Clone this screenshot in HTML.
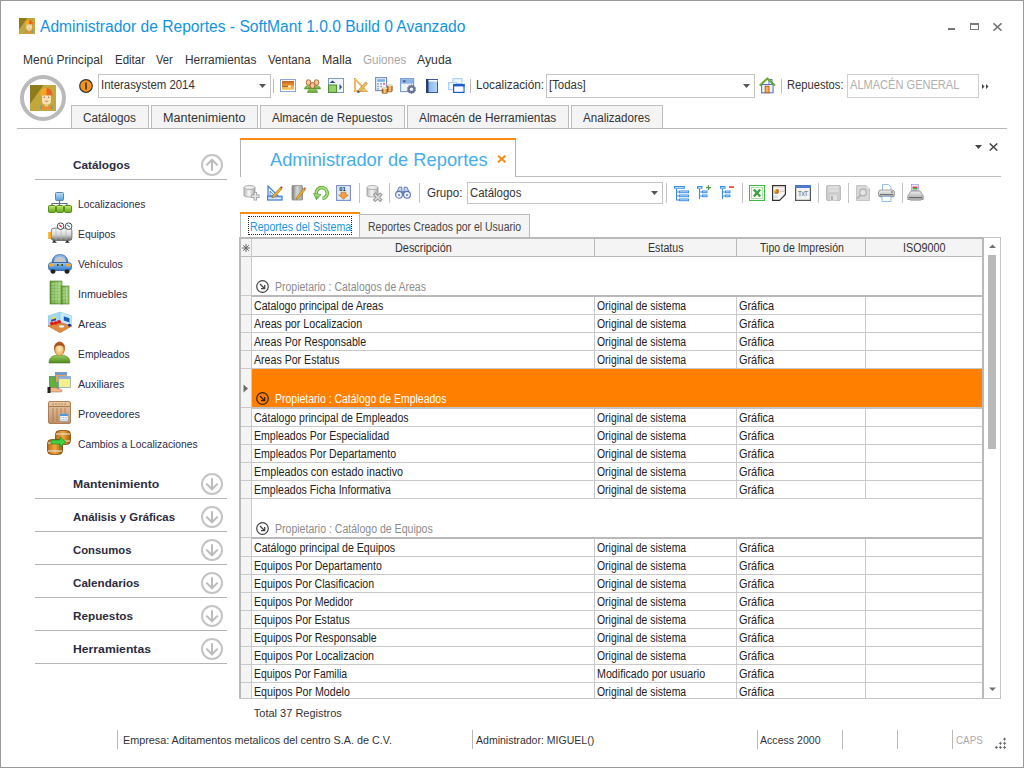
<!DOCTYPE html>
<html><head><meta charset="utf-8"><title>SoftMant</title>
<style>
html,body{margin:0;padding:0;width:1024px;height:768px;overflow:hidden;background:#fff;}
body{position:relative;font-family:"Liberation Sans",sans-serif;}
.a{position:absolute;box-sizing:border-box;}
.t{white-space:nowrap;transform-origin:0 0;}
</style></head><body>
<div class="a" style="left:0px;top:0px;width:1024px;height:1px;background:#999;"></div>
<div class="a" style="left:0px;top:0px;width:1px;height:768px;background:#999;"></div>
<div class="a" style="left:1023px;top:0px;width:1px;height:768px;background:#999;"></div>
<div class="a" style="left:0px;top:767px;width:1024px;height:1px;background:#999;"></div>
<svg class="a" style="left:19px;top:18px;" width="16" height="16" viewBox="0 0 26 26"><rect width="26" height="26" fill="#c2a83c"/><path d="M0 0H13.5L0 19Z" fill="#8f7b1c"/><path d="M10 10.5C10 5 12.5 3 16.2 3S22.5 5 22.5 10.5Z" fill="#f5a623"/><path d="M16.5 3C20 3.2 22.5 5.5 22.5 10.5H16.5Z" fill="#e8622a"/><path d="M12 10.5H21V16C21 18.5 19 20 16.5 20S12 18.5 12 16Z" fill="#f6e0b4"/><circle cx="14.3" cy="12.3" r="0.7" fill="#a07060"/><circle cx="18.6" cy="12.3" r="0.7" fill="#a07060"/><ellipse cx="16.5" cy="16.3" rx="2" ry="0.9" fill="#d8a080"/><rect x="15" y="19" width="3" height="3" fill="#eccb98"/><path d="M11 21.5H22V24H11Z" fill="#f08a30"/><rect x="10.5" y="20.5" width="1.5" height="3.5" fill="#5a9ad0"/><rect x="21" y="20.5" width="1.5" height="3.5" fill="#5a9ad0"/></svg>
<div class="a t" style="left:39.88px;top:19px;font-size:16px;line-height:16px;color:#0f94e4;font-weight:normal;font-family:'Liberation Sans',sans-serif;transform:scaleX(0.9748);">Administrador de Reportes - SoftMant 1.0.0 Build 0 Avanzado</div>
<div class="a" style="left:948px;top:28px;width:7px;height:2px;background:#777;"></div>
<svg class="a" style="left:970px;top:23px;" width="9" height="7" viewBox="0 0 9 7"><rect x="0.5" y="0.5" width="8" height="6" fill="none" stroke="#7a7a7a"/><rect x="0" y="0" width="9" height="2" fill="#7a7a7a"/></svg>
<svg class="a" style="left:993px;top:23px;" width="9" height="8" viewBox="0 0 9 8"><path d="M0.5 0.3L8.5 7.7M8.5 0.3L0.5 7.7" stroke="#7a7a7a" stroke-width="1.6"/></svg>
<div class="a t" style="left:23.34px;top:54px;font-size:12.5px;line-height:12.5px;color:#333;font-weight:normal;font-family:'Liberation Sans',sans-serif;transform:scaleX(0.9631);">Menú Principal</div>
<div class="a t" style="left:115.14px;top:54px;font-size:12.5px;line-height:12.5px;color:#333;font-weight:normal;font-family:'Liberation Sans',sans-serif;transform:scaleX(0.9195);">Editar</div>
<div class="a t" style="left:156.44px;top:54px;font-size:12.5px;line-height:12.5px;color:#333;font-weight:normal;font-family:'Liberation Sans',sans-serif;transform:scaleX(0.8967);">Ver</div>
<div class="a t" style="left:185.14px;top:54px;font-size:12.5px;line-height:12.5px;color:#333;font-weight:normal;font-family:'Liberation Sans',sans-serif;transform:scaleX(0.9507);">Herramientas</div>
<div class="a t" style="left:267.64px;top:54px;font-size:12.5px;line-height:12.5px;color:#333;font-weight:normal;font-family:'Liberation Sans',sans-serif;transform:scaleX(0.9312);">Ventana</div>
<div class="a t" style="left:321.84px;top:54px;font-size:12.5px;line-height:12.5px;color:#333;font-weight:normal;font-family:'Liberation Sans',sans-serif;transform:scaleX(0.9884);">Malla</div>
<div class="a t" style="left:362.84px;top:54px;font-size:12.5px;line-height:12.5px;color:#a8a8a8;font-weight:normal;font-family:'Liberation Sans',sans-serif;transform:scaleX(0.9284);">Guiones</div>
<div class="a t" style="left:417.44px;top:54px;font-size:12.5px;line-height:12.5px;color:#333;font-weight:normal;font-family:'Liberation Sans',sans-serif;transform:scaleX(0.9803);">Ayuda</div>
<svg class="a" style="left:20px;top:75px;" width="46" height="46" viewBox="0 0 46 46"><circle cx="23" cy="23" r="21" fill="none" stroke="#bababa" stroke-width="4"/></svg>
<svg class="a" style="left:30px;top:85px;" width="26" height="26" viewBox="0 0 26 26"><rect width="26" height="26" fill="#c2a83c"/><path d="M0 0H13.5L0 19Z" fill="#8f7b1c"/><path d="M10 10.5C10 5 12.5 3 16.2 3S22.5 5 22.5 10.5Z" fill="#f5a623"/><path d="M16.5 3C20 3.2 22.5 5.5 22.5 10.5H16.5Z" fill="#e8622a"/><path d="M12 10.5H21V16C21 18.5 19 20 16.5 20S12 18.5 12 16Z" fill="#f6e0b4"/><circle cx="14.3" cy="12.3" r="0.7" fill="#a07060"/><circle cx="18.6" cy="12.3" r="0.7" fill="#a07060"/><ellipse cx="16.5" cy="16.3" rx="2" ry="0.9" fill="#d8a080"/><rect x="15" y="19" width="3" height="3" fill="#eccb98"/><path d="M11 21.5H22V24H11Z" fill="#f08a30"/><rect x="10.5" y="20.5" width="1.5" height="3.5" fill="#5a9ad0"/><rect x="21" y="20.5" width="1.5" height="3.5" fill="#5a9ad0"/></svg>
<svg class="a" style="left:79px;top:79px;" width="14" height="14" viewBox="0 0 14 14"><circle cx="7" cy="7" r="6.3" fill="#f7931e" stroke="#333" stroke-width="1.2"/><rect x="6.2" y="3.5" width="1.6" height="7" fill="#333"/></svg>
<div class="a" style="left:98px;top:74px;width:173px;height:24px;background:#fff;border:1px solid #c4c4c4;"></div>
<div class="a t" style="left:101.00px;top:79px;font-size:12px;line-height:12px;color:#333;font-weight:normal;font-family:'Liberation Sans',sans-serif;transform:scaleX(0.9500);">Interasystem 2014</div>
<svg class="a" style="left:259px;top:84px;" width="8" height="5" viewBox="0 0 8 5"><path d="M0 0H7L3.5 4Z" fill="#555"/></svg>
<div class="a" style="left:273px;top:79px;width:1px;height:14px;background:#bbb;"></div>
<svg class="a" style="left:280px;top:79px;" width="16" height="13" viewBox="0 0 16 13"><defs><linearGradient id="gsun" x1="0" y1="0" x2="0" y2="1"><stop offset="0" stop-color="#c0601a"/><stop offset="0.55" stop-color="#f0a040"/><stop offset="1" stop-color="#f8d070"/></linearGradient></defs><rect x="0.5" y="0.5" width="15" height="12" fill="#fff" stroke="#8aa4d8"/><rect x="2" y="2" width="12" height="9" fill="url(#gsun)"/><path d="M2 7.3H8" stroke="#5a3010" stroke-width="0.8" opacity="0.7"/><circle cx="9.5" cy="7.5" r="1.3" fill="#fff8d0"/></svg>
<svg class="a" style="left:304px;top:79px;" width="17" height="14" viewBox="0 0 17 14"><defs><linearGradient id="gppl" x1="0" y1="0" x2="0" y2="1"><stop offset="0" stop-color="#a8d870"/><stop offset="1" stop-color="#5a9a30"/></linearGradient></defs><path d="M0.5 10C0.5 7.5 2.5 6.5 4.5 6.5S8.5 7.5 8.5 10Z" fill="url(#gppl)" stroke="#4a8a20" stroke-width="0.5"/><path d="M8.5 10C8.5 7.5 10.5 6.5 12.5 6.5S16.5 7.5 16.5 10Z" fill="url(#gppl)" stroke="#4a8a20" stroke-width="0.5"/><ellipse cx="4.5" cy="3.5" rx="2.3" ry="2.8" fill="#f4c890" stroke="#a0582a" stroke-width="0.8"/><ellipse cx="12.5" cy="3.5" rx="2.3" ry="2.8" fill="#f4c890" stroke="#a0582a" stroke-width="0.8"/><path d="M3.5 13.8C3.5 10.5 6 9.5 8.5 9.5S13.5 10.5 13.5 13.8Z" fill="url(#gppl)" stroke="#4a8a20" stroke-width="0.5"/><ellipse cx="8.5" cy="6.5" rx="2.5" ry="3" fill="#f4c890" stroke="#a0582a" stroke-width="0.9"/></svg>
<svg class="a" style="left:328px;top:78px;" width="16" height="15" viewBox="0 0 16 15"><rect x="0.5" y="0.5" width="15" height="14" fill="#f0f4fc" stroke="#7a9ad0"/><path d="M4.5 2.5L7.5 5H1.5Z" fill="#3a4a6a"/><path d="M11.5 6L14 9L11.5 12Z" fill="#3a4a6a"/><rect x="0.6" y="7" width="8" height="7.4" fill="#9ad070" stroke="#4a8a2a" stroke-width="1"/></svg>
<svg class="a" style="left:354px;top:78px;" width="14" height="15" viewBox="0 0 14 15"><path d="M1 1V13H12Z" fill="none" stroke="#e0a040" stroke-width="1.8"/><path d="M1 1V13H12Z" fill="none" stroke="#f8e0a8" stroke-width="0.6"/><path d="M4 12.5L11.5 4L13.5 5.5L6 14L3.5 14.8Z" fill="#f0c050" stroke="#a07020" stroke-width="0.5"/><path d="M3.5 14.8L4 12.5L6 14Z" fill="#2a3a6a"/></svg>
<svg class="a" style="left:375px;top:77px;" width="18" height="17" viewBox="0 0 18 17"><defs><linearGradient id="gcoin" x1="0" y1="0" x2="1" y2="0"><stop offset="0" stop-color="#a05a10"/><stop offset="0.5" stop-color="#f8d090"/><stop offset="1" stop-color="#b06818"/></linearGradient></defs><rect x="0.6" y="0.6" width="11" height="13" fill="#eef2fa" stroke="#7a8ac0" stroke-width="1.1"/><rect x="2.2" y="2.2" width="7.8" height="2.6" fill="#7ab0e8"/><g fill="#8a96b8"><rect x="2.2" y="6.2" width="1.6" height="1.4"/><rect x="5.2" y="6.2" width="1.6" height="1.4"/><rect x="2.2" y="8.8" width="1.6" height="1.4"/><rect x="5.2" y="8.8" width="1.6" height="1.4"/><rect x="2.2" y="11.2" width="1.6" height="1.4"/></g><rect x="8.2" y="6.2" width="1.6" height="1.4" fill="#e03030"/><rect x="12.5" y="8" width="4.8" height="7" rx="1.5" fill="url(#gcoin)" stroke="#7a4008" stroke-width="0.5"/><rect x="7" y="11" width="5.5" height="5.6" rx="1.5" fill="url(#gcoin)" stroke="#7a4008" stroke-width="0.5"/><ellipse cx="14.9" cy="8.3" rx="2.3" ry="1" fill="#f8e0b0"/><ellipse cx="9.75" cy="11.3" rx="2.6" ry="1" fill="#f8e0b0"/></svg>
<svg class="a" style="left:400px;top:78px;" width="17" height="16" viewBox="0 0 17 16"><rect x="0.6" y="0.6" width="13" height="13" fill="#eef3fb" stroke="#7a9ad0" stroke-width="1.1"/><rect x="1.2" y="1.2" width="11.8" height="4.5" fill="#8ab4e4"/><path d="M2.5 2.5H6L4.25 4.8Z" fill="#2a4a8a"/><path d="M11.5 7.5L12.6 8.8L14.3 8.5L14.6 10.2L16.1 11L15.3 12.5L16.1 14L14.6 14.8L14.3 16.5L12.6 16.2L11.5 17.5L10.4 16.2L8.7 16.5L8.4 14.8L6.9 14L7.7 12.5L6.9 11L8.4 10.2L8.7 8.5L10.4 8.8Z" fill="#6a7490" transform="translate(0,-1.3) scale(1)"/><circle cx="11.5" cy="11.2" r="1.7" fill="#eef3fb"/></svg>
<svg class="a" style="left:426px;top:79px;" width="12" height="14" viewBox="0 0 12 14"><defs><linearGradient id="gbook" x1="0" y1="0" x2="1" y2="0"><stop offset="0" stop-color="#7ab0e8"/><stop offset="1" stop-color="#b8d8f8"/></linearGradient></defs><rect x="0.5" y="0.5" width="11" height="13" fill="url(#gbook)" stroke="#3a5a9a"/><rect x="0" y="0" width="2.5" height="14" fill="#2a3a6a"/><rect x="2.5" y="1" width="9" height="1.5" fill="#fff"/></svg>
<svg class="a" style="left:448px;top:78px;" width="17" height="15" viewBox="0 0 17 15"><rect x="5" y="0.6" width="9" height="5" fill="#eef6fe" stroke="#a8ccf4" stroke-width="1.1"/><rect x="0.6" y="4.6" width="8" height="7" fill="#f2f8ff" stroke="#a8ccf4" stroke-width="1.1"/><rect x="5.6" y="6.6" width="10.4" height="7.8" fill="#fff" stroke="#1a5ccc" stroke-width="1.2"/><rect x="5" y="6" width="11.6" height="2.4" fill="#1a5ccc"/><path d="M13 13L15.5 10.5V13Z" fill="#c8dcf8"/></svg>
<div class="a" style="left:470px;top:79px;width:1px;height:14px;background:#bbb;"></div>
<div class="a t" style="left:476.26px;top:79px;font-size:12px;line-height:12px;color:#333;font-weight:normal;font-family:'Liberation Sans',sans-serif;transform:scaleX(0.9813);">Localización:</div>
<div class="a" style="left:546px;top:74px;width:209px;height:24px;background:#fff;border:1px solid #c4c4c4;"></div>
<div class="a t" style="left:549.00px;top:79px;font-size:12px;line-height:12px;color:#333;font-weight:normal;font-family:'Liberation Sans',sans-serif;transform:scaleX(0.9500);">[Todas]</div>
<svg class="a" style="left:743px;top:84px;" width="8" height="5" viewBox="0 0 8 5"><path d="M0 0H7L3.5 4Z" fill="#555"/></svg>
<svg class="a" style="left:759px;top:77px;" width="17" height="17" viewBox="0 0 17 17"><rect x="2.6" y="7.5" width="11.5" height="8.3" fill="#eaf2fc" stroke="#5a7ac8" stroke-width="1.1"/><rect x="10" y="2.5" width="3" height="5" fill="#eaf2fc" stroke="#5a7ac8" stroke-width="1"/><path d="M0.8 8.5L8.4 1.5L16 8.5" fill="none" stroke="#5a9a20" stroke-width="2"/><path d="M0.8 8.5L8.4 1.5L16 8.5" fill="none" stroke="#b8e070" stroke-width="0.7" stroke-dasharray="1 0.8"/><rect x="6.2" y="9.2" width="3.8" height="6.6" fill="#f4b050" stroke="#c05a10" stroke-width="0.9"/></svg>
<div class="a" style="left:781px;top:79px;width:1px;height:14px;background:#bbb;"></div>
<div class="a t" style="left:787.06px;top:79px;font-size:12px;line-height:12px;color:#333;font-weight:normal;font-family:'Liberation Sans',sans-serif;transform:scaleX(0.9304);">Repuestos:</div>
<div class="a" style="left:847px;top:74px;width:132px;height:24px;background:#fff;border:1px solid #cfcfcf;"></div>
<div class="a t" style="left:849.86px;top:79px;font-size:12px;line-height:12px;color:#b0b0b0;font-weight:normal;font-family:'Liberation Sans',sans-serif;transform:scaleX(0.9215);">ALMACÉN GENERAL</div>
<svg class="a" style="left:982px;top:84px;" width="7" height="5" viewBox="0 0 7 5"><path d="M0 0L2.5 2.5L0 5Z M4 0L6.5 2.5L4 5Z" fill="#444"/></svg>
<div class="a" style="left:17px;top:128px;width:990px;height:1px;background:#b9b9b9;"></div>
<div class="a" style="left:71px;top:105px;width:78px;height:23px;background:#f4f4f4;border:1px solid #bdbdbd;border-bottom:none;"></div>
<div class="a t" style="left:83.36px;top:112px;font-size:12px;line-height:12px;color:#333;font-weight:normal;font-family:'Liberation Sans',sans-serif;transform:scaleX(0.9786);">Catálogos</div>
<div class="a" style="left:151px;top:105px;width:107px;height:23px;background:#f4f4f4;border:1px solid #bdbdbd;border-bottom:none;"></div>
<div class="a t" style="left:163.06px;top:112px;font-size:12px;line-height:12px;color:#333;font-weight:normal;font-family:'Liberation Sans',sans-serif;transform:scaleX(1.0479);">Mantenimiento</div>
<div class="a" style="left:260px;top:105px;width:145px;height:23px;background:#f4f4f4;border:1px solid #bdbdbd;border-bottom:none;"></div>
<div class="a t" style="left:271.96px;top:112px;font-size:12px;line-height:12px;color:#333;font-weight:normal;font-family:'Liberation Sans',sans-serif;transform:scaleX(0.9719);">Almacén de Repuestos</div>
<div class="a" style="left:407px;top:105px;width:162px;height:23px;background:#f4f4f4;border:1px solid #bdbdbd;border-bottom:none;"></div>
<div class="a t" style="left:419.06px;top:112px;font-size:12px;line-height:12px;color:#333;font-weight:normal;font-family:'Liberation Sans',sans-serif;transform:scaleX(0.9896);">Almacén de Herramientas</div>
<div class="a" style="left:571px;top:105px;width:92px;height:23px;background:#f4f4f4;border:1px solid #bdbdbd;border-bottom:none;"></div>
<div class="a t" style="left:583.06px;top:112px;font-size:12px;line-height:12px;color:#333;font-weight:normal;font-family:'Liberation Sans',sans-serif;transform:scaleX(0.9669);">Analizadores</div>
<div class="a t" style="left:72.80px;top:160px;font-size:11px;line-height:11px;color:#2c2c40;font-weight:bold;font-family:'Liberation Sans',sans-serif;transform:scaleX(1.0718);">Catálogos</div>
<svg class="a" style="left:201px;top:154px;" width="22" height="22" viewBox="0 0 22 22"><circle cx="11" cy="11" r="10" fill="none" stroke="#c4c4c4" stroke-width="2"/><path d="M11 16.7V5.5M5.3 11.4L11 5.7L16.7 11.4" fill="none" stroke="#bcbcbc" stroke-width="2"/></svg>
<div class="a" style="left:35px;top:179px;width:192px;height:1px;background:#b4b4b4;"></div>
<div class="a t" style="left:78.30px;top:199px;font-size:11px;line-height:11px;color:#2c2c48;font-weight:normal;font-family:'Liberation Sans',sans-serif;transform:scaleX(0.9326);">Localizaciones</div>
<div class="a t" style="left:78.30px;top:229px;font-size:11px;line-height:11px;color:#2c2c48;font-weight:normal;font-family:'Liberation Sans',sans-serif;transform:scaleX(0.9431);">Equipos</div>
<div class="a t" style="left:78.30px;top:259px;font-size:11px;line-height:11px;color:#2c2c48;font-weight:normal;font-family:'Liberation Sans',sans-serif;transform:scaleX(0.9369);">Vehículos</div>
<div class="a t" style="left:78.30px;top:289px;font-size:11px;line-height:11px;color:#2c2c48;font-weight:normal;font-family:'Liberation Sans',sans-serif;transform:scaleX(0.9732);">Inmuebles</div>
<div class="a t" style="left:78.30px;top:319px;font-size:11px;line-height:11px;color:#2c2c48;font-weight:normal;font-family:'Liberation Sans',sans-serif;transform:scaleX(0.9915);">Areas</div>
<div class="a t" style="left:78.30px;top:349px;font-size:11px;line-height:11px;color:#2c2c48;font-weight:normal;font-family:'Liberation Sans',sans-serif;transform:scaleX(0.9375);">Empleados</div>
<div class="a t" style="left:78.30px;top:379px;font-size:11px;line-height:11px;color:#2c2c48;font-weight:normal;font-family:'Liberation Sans',sans-serif;transform:scaleX(0.9708);">Auxiliares</div>
<div class="a t" style="left:78.30px;top:409px;font-size:11px;line-height:11px;color:#2c2c48;font-weight:normal;font-family:'Liberation Sans',sans-serif;transform:scaleX(0.9939);">Proveedores</div>
<div class="a t" style="left:78.30px;top:439px;font-size:11px;line-height:11px;color:#2c2c48;font-weight:normal;font-family:'Liberation Sans',sans-serif;transform:scaleX(0.9366);">Cambios a Localizaciones</div>
<div class="a t" style="left:73.00px;top:479px;font-size:11px;line-height:11px;color:#2c2c40;font-weight:bold;font-family:'Liberation Sans',sans-serif;transform:scaleX(1.1118);">Mantenimiento</div>
<svg class="a" style="left:201px;top:473px;" width="22" height="22" viewBox="0 0 22 22"><circle cx="11" cy="11" r="10" fill="none" stroke="#c4c4c4" stroke-width="2"/><path d="M11 5.3V16.5M5.3 10.6L11 16.3L16.7 10.6" fill="none" stroke="#bcbcbc" stroke-width="2"/></svg>
<div class="a" style="left:35px;top:498px;width:192px;height:1px;background:#b4b4b4;"></div>
<div class="a t" style="left:73.00px;top:512px;font-size:11px;line-height:11px;color:#2c2c40;font-weight:bold;font-family:'Liberation Sans',sans-serif;transform:scaleX(1.0360);">Análisis y Gráficas</div>
<svg class="a" style="left:201px;top:506px;" width="22" height="22" viewBox="0 0 22 22"><circle cx="11" cy="11" r="10" fill="none" stroke="#c4c4c4" stroke-width="2"/><path d="M11 5.3V16.5M5.3 10.6L11 16.3L16.7 10.6" fill="none" stroke="#bcbcbc" stroke-width="2"/></svg>
<div class="a" style="left:35px;top:531px;width:192px;height:1px;background:#b4b4b4;"></div>
<div class="a t" style="left:73.00px;top:545px;font-size:11px;line-height:11px;color:#2c2c40;font-weight:bold;font-family:'Liberation Sans',sans-serif;transform:scaleX(1.0291);">Consumos</div>
<svg class="a" style="left:201px;top:539px;" width="22" height="22" viewBox="0 0 22 22"><circle cx="11" cy="11" r="10" fill="none" stroke="#c4c4c4" stroke-width="2"/><path d="M11 5.3V16.5M5.3 10.6L11 16.3L16.7 10.6" fill="none" stroke="#bcbcbc" stroke-width="2"/></svg>
<div class="a" style="left:35px;top:564px;width:192px;height:1px;background:#b4b4b4;"></div>
<div class="a t" style="left:73.00px;top:578px;font-size:11px;line-height:11px;color:#2c2c40;font-weight:bold;font-family:'Liberation Sans',sans-serif;transform:scaleX(1.0576);">Calendarios</div>
<svg class="a" style="left:201px;top:572px;" width="22" height="22" viewBox="0 0 22 22"><circle cx="11" cy="11" r="10" fill="none" stroke="#c4c4c4" stroke-width="2"/><path d="M11 5.3V16.5M5.3 10.6L11 16.3L16.7 10.6" fill="none" stroke="#bcbcbc" stroke-width="2"/></svg>
<div class="a" style="left:35px;top:597px;width:192px;height:1px;background:#b4b4b4;"></div>
<div class="a t" style="left:73.00px;top:611px;font-size:11px;line-height:11px;color:#2c2c40;font-weight:bold;font-family:'Liberation Sans',sans-serif;transform:scaleX(1.0668);">Repuestos</div>
<svg class="a" style="left:201px;top:605px;" width="22" height="22" viewBox="0 0 22 22"><circle cx="11" cy="11" r="10" fill="none" stroke="#c4c4c4" stroke-width="2"/><path d="M11 5.3V16.5M5.3 10.6L11 16.3L16.7 10.6" fill="none" stroke="#bcbcbc" stroke-width="2"/></svg>
<div class="a" style="left:35px;top:630px;width:192px;height:1px;background:#b4b4b4;"></div>
<div class="a t" style="left:73.00px;top:644px;font-size:11px;line-height:11px;color:#2c2c40;font-weight:bold;font-family:'Liberation Sans',sans-serif;transform:scaleX(1.1092);">Herramientas</div>
<svg class="a" style="left:201px;top:638px;" width="22" height="22" viewBox="0 0 22 22"><circle cx="11" cy="11" r="10" fill="none" stroke="#c4c4c4" stroke-width="2"/><path d="M11 5.3V16.5M5.3 10.6L11 16.3L16.7 10.6" fill="none" stroke="#bcbcbc" stroke-width="2"/></svg>
<div class="a" style="left:35px;top:663px;width:192px;height:1px;background:#b4b4b4;"></div>
<svg class="a" style="left:48px;top:191px;" width="24" height="23" viewBox="0 0 24 23"><defs><linearGradient id="gb" x1="0" y1="0" x2="0" y2="1"><stop offset="0" stop-color="#bfe0fa"/><stop offset="1" stop-color="#5a9fdc"/></linearGradient><linearGradient id="gg" x1="0" y1="0" x2="0" y2="1"><stop offset="0" stop-color="#c6ec6a"/><stop offset="1" stop-color="#5fa51c"/></linearGradient></defs><rect x="7.5" y="1.5" width="8" height="8" rx="1" fill="url(#gb)" stroke="#5f86b0"/><path d="M11.5 9.5V12M4 15V12.5H19V15M11.5 12.5V15" fill="none" stroke="#5f7090" stroke-width="1.2"/><rect x="0.5" y="14.5" width="7" height="7" rx="1" fill="url(#gg)" stroke="#5a8a20"/><rect x="8.5" y="14.5" width="7" height="7" rx="1" fill="url(#gg)" stroke="#5a8a20"/><rect x="16.5" y="14.5" width="7" height="7" rx="1" fill="url(#gg)" stroke="#5a8a20"/></svg>
<svg class="a" style="left:47px;top:222px;" width="26" height="22" viewBox="0 0 26 22"><defs><linearGradient id="gt" x1="0" y1="0" x2="0" y2="1"><stop offset="0" stop-color="#ffffff"/><stop offset="0.55" stop-color="#d4d4d4"/><stop offset="1" stop-color="#6a6a6a"/></linearGradient></defs><rect x="4.3" y="6.2" width="20.6" height="12.2" rx="2.5" fill="url(#gt)" stroke="#5a5a5a" stroke-width="0.8"/><path d="M9 7V18M14 7V18M19 7V18" stroke="#b4b4b4" stroke-width="0.7"/><circle cx="13.6" cy="4.2" r="3.3" fill="#fff" stroke="#3a3a3a" stroke-width="0.9"/><path d="M12.3 2.9L14.6 5" stroke="#f01010" stroke-width="1.1"/><circle cx="21.6" cy="4.2" r="3.3" fill="#fff" stroke="#3a3a3a" stroke-width="0.9"/><path d="M20.3 2.9L22.6 5" stroke="#2a80e8" stroke-width="1.1"/><rect x="1.2" y="10" width="3" height="7" fill="#f8b020"/><path d="M7 18.2L5 20.8H10Z M20 18.2L18 20.8H23Z" fill="#2a2a2a"/></svg>
<svg class="a" style="left:48px;top:254px;" width="24" height="20" viewBox="0 0 24 20"><defs><linearGradient id="gc" x1="0" y1="0" x2="0" y2="1"><stop offset="0" stop-color="#9ccaf4"/><stop offset="1" stop-color="#2f78c8"/></linearGradient></defs><path d="M4 9C4.5 3 7 0.7 12 0.7S19.5 3 20 9Z" fill="url(#gc)" stroke="#2a5a9a" stroke-width="0.8"/><path d="M6 8.5C6.5 4.5 8 3 12 3S17.5 4.5 18 8.5Z" fill="#c8c8c8"/><rect x="0.5" y="8.5" width="23" height="8" rx="3" fill="url(#gc)" stroke="#2a5a9a" stroke-width="0.8"/><ellipse cx="3.5" cy="11" rx="2.5" ry="1.6" fill="#f8a820"/><ellipse cx="20.5" cy="11" rx="2.5" ry="1.6" fill="#f8a820"/><rect x="9" y="10" width="6" height="2" fill="#204a80"/><rect x="10.5" y="10.2" width="3" height="1.5" fill="#e8c030"/><ellipse cx="5" cy="17.5" rx="2.5" ry="2.2" fill="#222"/><ellipse cx="19" cy="17.5" rx="2.5" ry="2.2" fill="#222"/></svg>
<svg class="a" style="left:49px;top:280px;" width="21" height="25" viewBox="0 0 21 25"><defs><linearGradient id="gh" x1="0" y1="0" x2="1" y2="0"><stop offset="0" stop-color="#5f9a3a"/><stop offset="1" stop-color="#9fd070"/></linearGradient></defs><rect x="1" y="1" width="12" height="23" fill="url(#gh)" stroke="#4f7a2a" stroke-width="0.6"/><rect x="12" y="6" width="8" height="18" fill="url(#gh)" stroke="#4f7a2a" stroke-width="0.6"/><path d="M2 4H12M2 7H12M2 10H12M2 13H12M2 16H12M2 19H12M13 9H19M13 12H19M13 15H19M13 18H19M4 2V23M7 2V23M10 2V23M15 7V23M17.5 7V23" stroke="#c8eab0" stroke-width="0.7" opacity="0.8"/></svg>
<svg class="a" style="left:48px;top:311px;" width="24" height="23" viewBox="0 0 24 23"><path d="M0 5L12 1V11.5L0 15Z" fill="#a4d8f2" stroke="#7ab8e0" stroke-width="0.5"/><path d="M12 1L24 5V15L12 11.5Z" fill="#c4eafc" stroke="#7ab8e0" stroke-width="0.5"/><path d="M0 15L12 11.5L24 15L12 21.8Z" fill="#e08a3a" stroke="#a85818" stroke-width="0.7" stroke-dasharray="1 0.6"/><path d="M3.2 6.8L8 5.3V7.3L3.2 8.8Z" fill="#f0e020"/><path d="M3.2 8.8L8 7.3V9.2L3.2 10.7Z" fill="#4a3aa0"/><path d="M15.8 5.2L21.5 7.2V11.5L15.8 9.5Z" fill="#1a5ab8"/><ellipse cx="4" cy="12.5" rx="2" ry="1.8" fill="#e41818"/><ellipse cx="7.6" cy="12" rx="2" ry="1.8" fill="#e41818"/><ellipse cx="11" cy="10.8" rx="2" ry="1.8" fill="#e41818"/><ellipse cx="13.5" cy="15.5" rx="3" ry="1.4" fill="#f4f4f4" stroke="#9a8a70" stroke-width="0.4"/><circle cx="21.5" cy="14.2" r="1.4" fill="#1a1aa8"/></svg>
<svg class="a" style="left:48px;top:340px;" width="23" height="24" viewBox="0 0 23 24"><defs><linearGradient id="gp" x1="0" y1="0" x2="0" y2="1"><stop offset="0" stop-color="#9cd060"/><stop offset="1" stop-color="#4f8a20"/></linearGradient><radialGradient id="gf" cx="0.5" cy="0.4" r="0.6"><stop offset="0" stop-color="#fff0c0"/><stop offset="1" stop-color="#e8a850"/></radialGradient></defs><path d="M1 23C1 17 5 15 11.5 15S22 17 22 23Z" fill="url(#gp)" stroke="#4a7a20" stroke-width="0.6"/><ellipse cx="11.5" cy="8.5" rx="5.5" ry="7" fill="#b8642a"/><ellipse cx="11.5" cy="10" rx="4.3" ry="5.8" fill="url(#gf)"/><path d="M6 7C7 2 16 2 17 7C15 5 8 5 6 7Z" fill="#a0501a"/></svg>
<svg class="a" style="left:47px;top:371px;" width="25" height="23" viewBox="0 0 25 23"><rect x="2.5" y="5.5" width="9" height="12" fill="#60b040" stroke="#3a6a8a" stroke-width="0.6"/><rect x="8.5" y="1.5" width="11" height="10" fill="#e8a060" stroke="#5a7aa0" stroke-width="0.6"/><rect x="8.5" y="1.5" width="11" height="2.5" fill="#6a9ad0"/><rect x="11.5" y="5.5" width="12" height="11" fill="#f4f090" stroke="#6a8ab0" stroke-width="0.6"/><rect x="11.5" y="5.5" width="12" height="2.5" fill="#8ab0e0"/><path d="M3 17C7 16 10 17 13 18S16 21 12 21H3Z" fill="#f0b890" stroke="#a06040" stroke-width="0.5"/><rect x="0.5" y="16" width="3" height="6" fill="#222"/></svg>
<svg class="a" style="left:48px;top:401px;" width="23" height="24" viewBox="0 0 23 24"><defs><linearGradient id="gw" x1="0" y1="0" x2="0" y2="1"><stop offset="0" stop-color="#e8c8a0"/><stop offset="1" stop-color="#c09068"/></linearGradient></defs><rect x="0.5" y="0.5" width="22" height="22" rx="1.5" fill="url(#gw)" stroke="#9a6a40" stroke-width="0.8"/><path d="M1 5.5H22" stroke="#9a6a40" stroke-width="0.8"/><path d="M5 2V4M8 2V4M11 2V4M14 2V4M17 2V4M5 7V21M9 7V21M13 7V21M17 7V13" stroke="#a87a50" stroke-width="0.8"/><rect x="12" y="13" width="8" height="7" fill="#f4f8fc" stroke="#8ab0d8" stroke-width="0.6"/><rect x="12" y="13" width="8" height="2" fill="#4a9ae0"/><path d="M13.5 16.5H19M13.5 18.5H19" stroke="#6a8ab0" stroke-width="0.6" stroke-dasharray="1 0.6"/></svg>
<svg class="a" style="left:47px;top:430px;" width="25" height="25" viewBox="0 0 25 25"><defs><linearGradient id="gk" x1="0" y1="0" x2="1" y2="0"><stop offset="0" stop-color="#b86a10"/><stop offset="0.5" stop-color="#f0a840"/><stop offset="1" stop-color="#a05a08"/></linearGradient></defs><rect x="8.5" y="0.5" width="15" height="14" rx="4" fill="url(#gk)" stroke="#6a3a00" stroke-width="0.7"/><path d="M9 4H23M9 11H23" stroke="#f0f0f0" stroke-width="1.2"/><rect x="0.5" y="9.5" width="15" height="15" rx="4" fill="url(#gk)" stroke="#6a3a00" stroke-width="0.7"/><path d="M1 13H15M1 21H15" stroke="#f0f0f0" stroke-width="1.2"/><path d="M4 10H13V7L19 12L13 17V14H4Z" fill="#40d040" stroke="#208020" stroke-width="0.6"/></svg>
<div class="a" style="left:240px;top:138px;width:276px;height:2px;background:#f88a10;"></div>
<div class="a" style="left:240px;top:140px;width:1px;height:37px;background:#b4b4b4;"></div>
<div class="a" style="left:515px;top:140px;width:1px;height:37px;background:#b4b4b4;"></div>
<div class="a" style="left:515px;top:176px;width:486px;height:1px;background:#bdbdbd;"></div>
<div class="a t" style="left:269.97px;top:151px;font-size:18.5px;line-height:18.5px;color:#45aeec;font-weight:normal;font-family:'Liberation Sans',sans-serif;transform:scaleX(0.9887);">Administrador de Reportes</div>
<svg class="a" style="left:497px;top:155px;" width="10" height="8" viewBox="0 0 10 8"><path d="M1 0.8L8.5 7.2M8.5 0.8L1 7.2" stroke="#f08a18" stroke-width="2"/></svg>
<svg class="a" style="left:975px;top:145px;" width="7" height="4" viewBox="0 0 7 4"><path d="M0 0H7L3.5 4Z" fill="#444"/></svg>
<svg class="a" style="left:989px;top:143px;" width="9" height="8" viewBox="0 0 9 8"><path d="M0.7 0.5L8.3 7.5M8.3 0.5L0.7 7.5" stroke="#444" stroke-width="1.5"/></svg>
<svg class="a" style="left:243px;top:185px;" width="18" height="17" viewBox="0 0 18 17"><defs><linearGradient id="gdb" x1="0" y1="0" x2="1" y2="0"><stop offset="0" stop-color="#bcbcbc"/><stop offset="0.45" stop-color="#f6f6f6"/><stop offset="1" stop-color="#a8a8a8"/></linearGradient></defs><path d="M1 2.5V10.5C1 12.5 12 12.5 12 10.5V2.5Z" fill="url(#gdb)" stroke="#9a9a9a" stroke-width="0.8"/><ellipse cx="6.5" cy="2.5" rx="5.5" ry="2" fill="#ececec" stroke="#9a9a9a" stroke-width="0.8"/><path d="M12.3 7V15.5M8 11.2H16.6" stroke="#a4a4a4" stroke-width="3.6"/><path d="M12.3 7.8V14.7M8.8 11.2H15.8" stroke="#e8e8e8" stroke-width="1.6"/></svg>
<svg class="a" style="left:267px;top:185px;" width="16" height="16" viewBox="0 0 16 16"><path d="M1 14V1L12 12" fill="none" stroke="#3a7ad8" stroke-width="1.2"/><path d="M3 11V6L7.5 10.5Z" fill="#dce8fa" stroke="#3a7ad8" stroke-width="0.8"/><rect x="0.6" y="11.2" width="14.4" height="3.8" fill="#e4eefc" stroke="#3a7ad8" stroke-width="1.2"/><path d="M3 12V13M5 12V13.3M7 12V13M9 12V13.3M11 12V13M13 12V13.3" stroke="#3a7ad8" stroke-width="0.6"/><path d="M5.5 11L13 2.5L14.8 4L7.3 12.4L5 12.8Z" fill="#f0b030" stroke="#806010" stroke-width="0.5"/><path d="M13 2.5L14.8 4L15.6 2.2L14.3 1.2Z" fill="#e02850"/></svg>
<svg class="a" style="left:291px;top:185px;" width="15" height="16" viewBox="0 0 15 16"><defs><linearGradient id="gnb" x1="0" y1="0" x2="1" y2="0"><stop offset="0" stop-color="#8a8a8a"/><stop offset="0.5" stop-color="#d8d8d8"/><stop offset="1" stop-color="#a0a0a0"/></linearGradient></defs><rect x="1" y="0.6" width="10.5" height="14.4" rx="0.8" fill="url(#gnb)" stroke="#7a7a7a" stroke-width="0.7"/><path d="M2.8 1.5V14" stroke="#6a6a6a" stroke-width="0.6" stroke-dasharray="1 1"/><path d="M5.5 12.5L12.5 3.5L14.2 5L7.2 13.8L5 14.2Z" fill="#f0b030" stroke="#806010" stroke-width="0.5"/><path d="M12.5 3.5L14.2 5L14.9 3.2L13.7 2.3Z" fill="#e05030"/></svg>
<svg class="a" style="left:313px;top:186px;" width="16" height="14" viewBox="0 0 16 14"><defs><linearGradient id="grf" x1="0" y1="0" x2="0" y2="1"><stop offset="0" stop-color="#b8e890"/><stop offset="1" stop-color="#58a830"/></linearGradient></defs><path d="M4.2 10.2A5.5 5.5 0 1 1 9.5 12.5" fill="none" stroke="#5aa830" stroke-width="3.4"/><path d="M4.2 10.2A5.5 5.5 0 1 1 9.5 12.5" fill="none" stroke="#b4e28a" stroke-width="1.6"/><path d="M0.5 7.5L8 8.5L3.5 13.8Z" fill="url(#grf)" stroke="#4a9a28" stroke-width="0.6"/></svg>
<svg class="a" style="left:336px;top:185px;" width="15" height="16" viewBox="0 0 15 16"><rect x="0.6" y="0.6" width="13.8" height="14.8" fill="#e4ecf8" stroke="#7a90c8" stroke-width="1.1"/><text x="3.2" y="6.2" font-size="6" font-family="Liberation Sans" font-weight="bold" fill="#222">01</text><path d="M5 7.2H10V10H12.3L7.5 14.3L2.7 10H5Z" fill="#f4a040" stroke="#c06a20" stroke-width="0.6"/></svg>
<div class="a" style="left:359px;top:183px;width:1px;height:20px;background:#c4c4c4;"></div>
<svg class="a" style="left:366px;top:185px;" width="17" height="17" viewBox="0 0 17 17"><path d="M1 2.5V10.5C1 12.5 12 12.5 12 10.5V2.5Z" fill="url(#gdb)" stroke="#9a9a9a" stroke-width="0.8"/><ellipse cx="6.5" cy="2.5" rx="5.5" ry="2" fill="#ececec" stroke="#9a9a9a" stroke-width="0.8"/><path d="M8 8.5L15.5 16M15.5 8.5L8 16" stroke="#9a9a9a" stroke-width="3.6"/><path d="M8.8 9.3L14.7 15.2M14.7 9.3L8.8 15.2" stroke="#dedede" stroke-width="1.5"/></svg>
<div class="a" style="left:389px;top:183px;width:1px;height:20px;background:#c4c4c4;"></div>
<svg class="a" style="left:395px;top:186px;" width="16" height="13" viewBox="0 0 16 13"><path d="M2 6L4 1.2H6.8L7 6M14 6L12 1.2H9.2L9 6" fill="#c8d4ec" stroke="#5a72b0" stroke-width="0.9"/><rect x="6.5" y="5" width="3" height="3" fill="#7a8cc0"/><circle cx="4" cy="8.8" r="3.4" fill="#eef2fa" stroke="#5a72b0" stroke-width="1.1"/><circle cx="12" cy="8.8" r="3.4" fill="#eef2fa" stroke="#5a72b0" stroke-width="1.1"/><circle cx="4" cy="9" r="1" fill="#5a82c8"/><circle cx="12" cy="9" r="1" fill="#5a82c8"/></svg>
<div class="a" style="left:419px;top:183px;width:1px;height:20px;background:#c4c4c4;"></div>
<div class="a t" style="left:427.06px;top:187px;font-size:12px;line-height:12px;color:#333;font-weight:normal;font-family:'Liberation Sans',sans-serif;transform:scaleX(0.9644);">Grupo:</div>
<div class="a" style="left:467px;top:182px;width:196px;height:22px;background:#fff;border:1px solid #c4c4c4;"></div>
<div class="a t" style="left:470.00px;top:187px;font-size:12px;line-height:12px;color:#333;font-weight:normal;font-family:'Liberation Sans',sans-serif;transform:scaleX(0.9500);">Catálogos</div>
<svg class="a" style="left:651px;top:191px;" width="8" height="5" viewBox="0 0 8 5"><path d="M0 0H7L3.5 4Z" fill="#555"/></svg>
<div class="a" style="left:666px;top:183px;width:1px;height:20px;background:#c4c4c4;"></div>
<svg class="a" style="left:673px;top:185px;" width="17" height="17" viewBox="0 0 17 17"><path d="M3.5 4V15.5M3.5 7H6.5M3.5 11H6.5M3.5 15H6.5" fill="none" stroke="#3a8ee6" stroke-width="1.1"/><rect x="1.5" y="1.5" width="10" height="1.7" stroke="#3a8ee6" stroke-width="1" fill="#e4f0fc"/><rect x="6.5" y="6" width="9" height="1.7" stroke="#3a8ee6" stroke-width="1" fill="#e4f0fc"/><rect x="6.5" y="10" width="9" height="1.7" stroke="#3a8ee6" stroke-width="1" fill="#e4f0fc"/><rect x="6.5" y="14" width="9" height="1.7" stroke="#3a8ee6" stroke-width="1" fill="#e4f0fc"/></svg>
<svg class="a" style="left:696px;top:185px;" width="16" height="16" viewBox="0 0 16 16"><path d="M3.5 4V14M3.5 7H6.5M3.5 11H6.5" fill="none" stroke="#3a8ee6" stroke-width="1.1"/><rect x="1.5" y="1.5" width="4.5" height="1.7" stroke="#3a8ee6" stroke-width="1" fill="#e4f0fc"/><rect x="6.5" y="6" width="4.5" height="1.7" stroke="#3a8ee6" stroke-width="1" fill="#e4f0fc"/><rect x="6.5" y="10" width="4.5" height="1.7" stroke="#3a8ee6" stroke-width="1" fill="#e4f0fc"/><path d="M12.5 0.3V5M10 2.6H15" stroke="#4a9a3a" stroke-width="1.3"/></svg>
<svg class="a" style="left:719px;top:185px;" width="16" height="16" viewBox="0 0 16 16"><path d="M3.5 4V14M3.5 7H6.5M3.5 11H6.5" fill="none" stroke="#3a8ee6" stroke-width="1.1"/><rect x="1.5" y="1.5" width="4.5" height="1.7" stroke="#3a8ee6" stroke-width="1" fill="#e4f0fc"/><rect x="6.5" y="6" width="4.5" height="1.7" stroke="#3a8ee6" stroke-width="1" fill="#e4f0fc"/><rect x="6.5" y="10" width="4.5" height="1.7" stroke="#3a8ee6" stroke-width="1" fill="#e4f0fc"/><rect x="10" y="1.2" width="5" height="1.7" fill="#e05030"/></svg>
<div class="a" style="left:742px;top:183px;width:1px;height:20px;background:#c4c4c4;"></div>
<svg class="a" style="left:749px;top:185px;" width="16" height="16" viewBox="0 0 16 16"><rect x="0.5" y="0.5" width="15" height="15" fill="#f4fbf0" stroke="#3cb84a"/><rect x="2.5" y="2.5" width="11" height="11" fill="#fffff4" stroke="#9ad89a" stroke-width="0.8"/><path d="M4.8 4.5L11.2 11.5M11.2 4.5L4.8 11.5" stroke="#34a040" stroke-width="2.3"/></svg>
<svg class="a" style="left:772px;top:185px;" width="14" height="16" viewBox="0 0 14 16"><path d="M0.6 0.6H13.4V9.5L7.5 15.4H0.6Z" fill="#fafafa" stroke="#333" stroke-width="1.2"/><path d="M2 2.2H12" stroke="#f0c0a0" stroke-width="0.6"/><path d="M8 5H12M8 6.5H12M2 11H6M2 12.5H6" stroke="#c8c8c8" stroke-width="0.8"/><circle cx="4.5" cy="6.5" r="2.4" fill="#f0c030"/><path d="M4.5 6.5V4.1A2.4 2.4 0 0 1 6.9 6.5Z" fill="#e84030"/><path d="M4.5 6.5H6.9A2.4 2.4 0 0 1 2.4 7.7Z" fill="#e05a30"/><path d="M2.2 6.5A2.4 2.4 0 0 0 4.5 8.9V6.5Z" fill="#80b040"/></svg>
<svg class="a" style="left:795px;top:185px;" width="16" height="16" viewBox="0 0 16 16"><rect x="0.6" y="0.6" width="14.8" height="14.8" fill="#f4f4f4" stroke="#555" stroke-width="1.2"/><rect x="0" y="0" width="16" height="3" fill="#4a7ac8"/><path d="M1 6.5H15M1 10H15M5 3V15M10 3V15" stroke="#e0e0e0" stroke-width="0.6"/><text x="3" y="11.3" font-size="6.3" font-family="Liberation Sans" fill="#666" letter-spacing="-0.4">TxT</text></svg>
<div class="a" style="left:818px;top:183px;width:1px;height:20px;background:#c4c4c4;"></div>
<svg class="a" style="left:826px;top:185px;" width="15" height="16" viewBox="0 0 15 16"><rect x="0.5" y="0.5" width="14" height="15" rx="1.5" fill="#cdcdcd" stroke="#bdbdbd"/><rect x="2.5" y="1" width="10" height="6" fill="#dedede"/><path d="M2.5 4H12.5" stroke="#cfcfcf" stroke-width="0.6"/><rect x="4" y="10" width="7" height="5.5" fill="#e0e0e0"/><rect x="5" y="11" width="2" height="4" fill="#b0b0b0"/></svg>
<div class="a" style="left:848px;top:183px;width:1px;height:20px;background:#c4c4c4;"></div>
<svg class="a" style="left:856px;top:185px;" width="14" height="16" viewBox="0 0 14 16"><path d="M0.5 0.5H10L13.5 4V15.5H0.5Z" fill="#d8d8d8" stroke="#c4c4c4"/><path d="M10 0.5V4H13.5" fill="#e8e8e8" stroke="#c4c4c4" stroke-width="0.7"/><circle cx="7" cy="7.5" r="3.3" fill="#e4e4e4" stroke="#b0b0b0" stroke-width="1.2"/><path d="M4.6 10L1.2 13.6" stroke="#b0b0b0" stroke-width="1.6"/></svg>
<svg class="a" style="left:878px;top:184px;" width="17" height="18" viewBox="0 0 17 18"><defs><linearGradient id="gpr" x1="0" y1="0" x2="0" y2="1"><stop offset="0" stop-color="#f4f4f4"/><stop offset="0.6" stop-color="#c8c8c8"/><stop offset="1" stop-color="#8a8a8a"/></linearGradient></defs><path d="M4.5 0.5H10.5L13 3V7H4.5Z" fill="#fff" stroke="#8ab8e8" stroke-width="0.9"/><rect x="0.5" y="6" width="16" height="7" rx="2.5" fill="url(#gpr)" stroke="#8a8a8a" stroke-width="0.8"/><path d="M2 10.5H15" stroke="#6a6a6a" stroke-width="0.9"/><rect x="4" y="12.5" width="9" height="5" fill="#fff" stroke="#8ab8e8" stroke-width="0.9"/><circle cx="14" cy="8" r="0.7" fill="#333"/></svg>
<div class="a" style="left:902px;top:183px;width:1px;height:20px;background:#c4c4c4;"></div>
<svg class="a" style="left:907px;top:184px;" width="17" height="18" viewBox="0 0 17 18"><rect x="4.5" y="0.5" width="7" height="6" fill="#f4f0ff" stroke="#a090d0" stroke-width="0.7"/><rect x="5.5" y="2.5" width="5" height="1.6" fill="#e04060"/><rect x="5.5" y="4" width="5" height="1.5" fill="#40b040"/><defs><linearGradient id="gp2" x1="0" y1="0" x2="0" y2="1"><stop offset="0" stop-color="#f0f0f0"/><stop offset="1" stop-color="#a0a0a0"/></linearGradient></defs><path d="M0.8 12L4 7H13L16.2 12V15.5H0.8Z" fill="url(#gp2)" stroke="#8a8a8a" stroke-width="0.8"/><path d="M2 13.5H15" stroke="#6a6a6a"/><rect x="3" y="15.5" width="11" height="1.5" fill="#c0c0c0"/></svg>
<div class="a" style="left:240px;top:212px;width:120px;height:2px;background:#f88a10;"></div>
<div class="a" style="left:240px;top:214px;width:1px;height:24px;background:#bdbdbd;"></div>
<div class="a" style="left:359px;top:214px;width:171px;height:24px;background:#f4f4f4;border:1px solid #bdbdbd;border-bottom:none;"></div>
<div class="a" style="left:248px;top:216px;width:104px;height:19px;border:1px dotted #222;"></div>
<div class="a t" style="left:250.24px;top:221px;font-size:12.5px;line-height:12.5px;color:#1a96e2;font-weight:normal;font-family:'Liberation Sans',sans-serif;transform:scaleX(0.8462);">Reportes del Sistema</div>
<div class="a t" style="left:368.44px;top:221px;font-size:12.5px;line-height:12.5px;color:#444;font-weight:normal;font-family:'Liberation Sans',sans-serif;transform:scaleX(0.8380);">Reportes Creados por el Usuario</div>
<div class="a" style="left:239px;top:237px;width:745px;height:2px;background:#b9b9b9;"></div>
<div class="a" style="left:984px;top:237px;width:17px;height:1px;background:#c4c4c4;"></div>
<div class="a" style="left:239px;top:237px;width:2px;height:462px;background:#b9b9b9;"></div>
<div class="a" style="left:982px;top:237px;width:2px;height:462px;background:#b9b9b9;"></div>
<div class="a" style="left:1000px;top:237px;width:1px;height:462px;background:#c4c4c4;"></div>
<div class="a" style="left:239px;top:698px;width:762px;height:1px;background:#c4c4c4;"></div>
<svg class="a" style="left:989px;top:244px;" width="7" height="5" viewBox="0 0 7 5"><path d="M0 4H7L3.5 0.5Z" fill="#707070"/></svg>
<div class="a" style="left:988px;top:255px;width:8px;height:194px;background:#b8b8b8;"></div>
<svg class="a" style="left:989px;top:687px;" width="7" height="5" viewBox="0 0 7 5"><path d="M0 0.5H7L3.5 4Z" fill="#707070"/></svg>
<div class="a" style="left:241px;top:239px;width:741px;height:17px;background:#f4f4f4;"></div>
<div class="a" style="left:241px;top:256px;width:741px;height:1px;background:#b9b9b9;"></div>
<div class="a" style="left:241px;top:257px;width:10px;height:441px;background:#f4f4f4;"></div>
<div class="a" style="left:251px;top:239px;width:1px;height:459px;background:#c9c9c9;"></div>
<div class="a" style="left:594px;top:239px;width:1px;height:17px;background:#b9b9b9;"></div>
<div class="a" style="left:736px;top:239px;width:1px;height:17px;background:#b9b9b9;"></div>
<div class="a" style="left:865px;top:239px;width:1px;height:17px;background:#b9b9b9;"></div>
<svg class="a" style="left:242px;top:244px;" width="8" height="8" viewBox="0 0 8 8"><path d="M4 0V8M0 4H8M1.2 1.2L6.8 6.8M6.8 1.2L1.2 6.8" stroke="#666" stroke-width="1"/></svg>
<div class="a t" style="left:395.04px;top:242px;font-size:12.5px;line-height:12.5px;color:#333;font-weight:normal;font-family:'Liberation Sans',sans-serif;transform:scaleX(0.8702);">Descripción</div>
<div class="a t" style="left:648.19px;top:242px;font-size:12.5px;line-height:12.5px;color:#333;font-weight:normal;font-family:'Liberation Sans',sans-serif;transform:scaleX(0.8522);">Estatus</div>
<div class="a t" style="left:759.74px;top:242px;font-size:12.5px;line-height:12.5px;color:#333;font-weight:normal;font-family:'Liberation Sans',sans-serif;transform:scaleX(0.8427);">Tipo de Impresión</div>
<div class="a t" style="left:902.84px;top:242px;font-size:12.5px;line-height:12.5px;color:#333;font-weight:normal;font-family:'Liberation Sans',sans-serif;transform:scaleX(0.8598);">ISO9000</div>
<div class="a" style="left:252px;top:295px;width:730px;height:2px;background:#b9b9b9;"></div>
<div class="a" style="left:241px;top:295px;width:10px;height:1px;background:#c9c9c9;"></div>
<svg class="a" style="left:256px;top:280px;" width="13" height="13" viewBox="0 0 13 13"><circle cx="6.5" cy="6.5" r="5.8" fill="none" stroke="#444" stroke-width="1.2"/><path d="M4 4L8.7 8.7M8.7 5V8.7H5" fill="none" stroke="#444" stroke-width="1.3"/></svg>
<div class="a t" style="left:275.04px;top:281px;font-size:12.5px;line-height:12.5px;color:#8c8c8c;font-weight:normal;font-family:'Liberation Sans',sans-serif;transform:scaleX(0.8387);">Propietario : Catalogos de Areas</div>
<div class="a" style="left:252px;top:314px;width:730px;height:1px;background:#c9c9c9;"></div>
<div class="a" style="left:241px;top:314px;width:10px;height:1px;background:#c9c9c9;"></div>
<div class="a" style="left:594px;top:297px;width:1px;height:17px;background:#c9c9c9;"></div>
<div class="a" style="left:736px;top:297px;width:1px;height:17px;background:#c9c9c9;"></div>
<div class="a" style="left:865px;top:297px;width:1px;height:17px;background:#c9c9c9;"></div>
<div class="a t" style="left:253.84px;top:300px;font-size:12.5px;line-height:12.5px;color:#222;font-weight:normal;font-family:'Liberation Sans',sans-serif;transform:scaleX(0.8454);">Catalogo principal de Areas</div>
<div class="a t" style="left:596.84px;top:300px;font-size:12.5px;line-height:12.5px;color:#222;font-weight:normal;font-family:'Liberation Sans',sans-serif;transform:scaleX(0.8330);">Original de sistema</div>
<div class="a t" style="left:738.84px;top:300px;font-size:12.5px;line-height:12.5px;color:#222;font-weight:normal;font-family:'Liberation Sans',sans-serif;transform:scaleX(0.8718);">Gráfica</div>
<div class="a" style="left:252px;top:332px;width:730px;height:1px;background:#c9c9c9;"></div>
<div class="a" style="left:241px;top:332px;width:10px;height:1px;background:#c9c9c9;"></div>
<div class="a" style="left:594px;top:315px;width:1px;height:17px;background:#c9c9c9;"></div>
<div class="a" style="left:736px;top:315px;width:1px;height:17px;background:#c9c9c9;"></div>
<div class="a" style="left:865px;top:315px;width:1px;height:17px;background:#c9c9c9;"></div>
<div class="a t" style="left:253.84px;top:318px;font-size:12.5px;line-height:12.5px;color:#222;font-weight:normal;font-family:'Liberation Sans',sans-serif;transform:scaleX(0.8550);">Areas por Localizacion</div>
<div class="a t" style="left:596.84px;top:318px;font-size:12.5px;line-height:12.5px;color:#222;font-weight:normal;font-family:'Liberation Sans',sans-serif;transform:scaleX(0.8330);">Original de sistema</div>
<div class="a t" style="left:738.84px;top:318px;font-size:12.5px;line-height:12.5px;color:#222;font-weight:normal;font-family:'Liberation Sans',sans-serif;transform:scaleX(0.8718);">Gráfica</div>
<div class="a" style="left:252px;top:350px;width:730px;height:1px;background:#c9c9c9;"></div>
<div class="a" style="left:241px;top:350px;width:10px;height:1px;background:#c9c9c9;"></div>
<div class="a" style="left:594px;top:333px;width:1px;height:17px;background:#c9c9c9;"></div>
<div class="a" style="left:736px;top:333px;width:1px;height:17px;background:#c9c9c9;"></div>
<div class="a" style="left:865px;top:333px;width:1px;height:17px;background:#c9c9c9;"></div>
<div class="a t" style="left:253.84px;top:336px;font-size:12.5px;line-height:12.5px;color:#222;font-weight:normal;font-family:'Liberation Sans',sans-serif;transform:scaleX(0.8493);">Areas Por Responsable</div>
<div class="a t" style="left:596.84px;top:336px;font-size:12.5px;line-height:12.5px;color:#222;font-weight:normal;font-family:'Liberation Sans',sans-serif;transform:scaleX(0.8330);">Original de sistema</div>
<div class="a t" style="left:738.84px;top:336px;font-size:12.5px;line-height:12.5px;color:#222;font-weight:normal;font-family:'Liberation Sans',sans-serif;transform:scaleX(0.8718);">Gráfica</div>
<div class="a" style="left:252px;top:368px;width:730px;height:1px;background:#c9c9c9;"></div>
<div class="a" style="left:241px;top:368px;width:10px;height:1px;background:#c9c9c9;"></div>
<div class="a" style="left:594px;top:351px;width:1px;height:17px;background:#c9c9c9;"></div>
<div class="a" style="left:736px;top:351px;width:1px;height:17px;background:#c9c9c9;"></div>
<div class="a" style="left:865px;top:351px;width:1px;height:17px;background:#c9c9c9;"></div>
<div class="a t" style="left:253.84px;top:354px;font-size:12.5px;line-height:12.5px;color:#222;font-weight:normal;font-family:'Liberation Sans',sans-serif;transform:scaleX(0.8480);">Areas Por Estatus</div>
<div class="a t" style="left:596.84px;top:354px;font-size:12.5px;line-height:12.5px;color:#222;font-weight:normal;font-family:'Liberation Sans',sans-serif;transform:scaleX(0.8330);">Original de sistema</div>
<div class="a t" style="left:738.84px;top:354px;font-size:12.5px;line-height:12.5px;color:#222;font-weight:normal;font-family:'Liberation Sans',sans-serif;transform:scaleX(0.8718);">Gráfica</div>
<div class="a" style="left:252px;top:369px;width:730px;height:38px;background:#ff8000;"></div>
<div class="a" style="left:252px;top:407px;width:730px;height:2px;background:#c4c4c4;"></div>
<div class="a" style="left:241px;top:407px;width:10px;height:1px;background:#c9c9c9;"></div>
<svg class="a" style="left:256px;top:392px;" width="13" height="13" viewBox="0 0 13 13"><circle cx="6.5" cy="6.5" r="5.8" fill="none" stroke="#3a2000" stroke-width="1.2"/><path d="M4 4L8.7 8.7M8.7 5V8.7H5" fill="none" stroke="#3a2000" stroke-width="1.3"/></svg>
<div class="a t" style="left:275.04px;top:393px;font-size:12.5px;line-height:12.5px;color:#fff;font-weight:normal;font-family:'Liberation Sans',sans-serif;transform:scaleX(0.8391);">Propietario : Catálogo de Empleados</div>
<div class="a" style="left:241px;top:369px;width:10px;height:38px;background:#f4f4f4;"></div>
<svg class="a" style="left:243px;top:384px;" width="6" height="9" viewBox="0 0 6 9"><path d="M0.5 0.5L5 4.5L0.5 8.5Z" fill="#6a6a6a"/></svg>
<div class="a" style="left:252px;top:426px;width:730px;height:1px;background:#c9c9c9;"></div>
<div class="a" style="left:241px;top:426px;width:10px;height:1px;background:#c9c9c9;"></div>
<div class="a" style="left:594px;top:409px;width:1px;height:17px;background:#c9c9c9;"></div>
<div class="a" style="left:736px;top:409px;width:1px;height:17px;background:#c9c9c9;"></div>
<div class="a" style="left:865px;top:409px;width:1px;height:17px;background:#c9c9c9;"></div>
<div class="a t" style="left:253.84px;top:412px;font-size:12.5px;line-height:12.5px;color:#222;font-weight:normal;font-family:'Liberation Sans',sans-serif;transform:scaleX(0.8423);">Cátalogo principal de Empleados</div>
<div class="a t" style="left:596.84px;top:412px;font-size:12.5px;line-height:12.5px;color:#222;font-weight:normal;font-family:'Liberation Sans',sans-serif;transform:scaleX(0.8330);">Original de sistema</div>
<div class="a t" style="left:738.84px;top:412px;font-size:12.5px;line-height:12.5px;color:#222;font-weight:normal;font-family:'Liberation Sans',sans-serif;transform:scaleX(0.8718);">Gráfica</div>
<div class="a" style="left:252px;top:444px;width:730px;height:1px;background:#c9c9c9;"></div>
<div class="a" style="left:241px;top:444px;width:10px;height:1px;background:#c9c9c9;"></div>
<div class="a" style="left:594px;top:427px;width:1px;height:17px;background:#c9c9c9;"></div>
<div class="a" style="left:736px;top:427px;width:1px;height:17px;background:#c9c9c9;"></div>
<div class="a" style="left:865px;top:427px;width:1px;height:17px;background:#c9c9c9;"></div>
<div class="a t" style="left:253.84px;top:430px;font-size:12.5px;line-height:12.5px;color:#222;font-weight:normal;font-family:'Liberation Sans',sans-serif;transform:scaleX(0.8449);">Empleados Por Especialidad</div>
<div class="a t" style="left:596.84px;top:430px;font-size:12.5px;line-height:12.5px;color:#222;font-weight:normal;font-family:'Liberation Sans',sans-serif;transform:scaleX(0.8330);">Original de sistema</div>
<div class="a t" style="left:738.84px;top:430px;font-size:12.5px;line-height:12.5px;color:#222;font-weight:normal;font-family:'Liberation Sans',sans-serif;transform:scaleX(0.8718);">Gráfica</div>
<div class="a" style="left:252px;top:462px;width:730px;height:1px;background:#c9c9c9;"></div>
<div class="a" style="left:241px;top:462px;width:10px;height:1px;background:#c9c9c9;"></div>
<div class="a" style="left:594px;top:445px;width:1px;height:17px;background:#c9c9c9;"></div>
<div class="a" style="left:736px;top:445px;width:1px;height:17px;background:#c9c9c9;"></div>
<div class="a" style="left:865px;top:445px;width:1px;height:17px;background:#c9c9c9;"></div>
<div class="a t" style="left:253.84px;top:448px;font-size:12.5px;line-height:12.5px;color:#222;font-weight:normal;font-family:'Liberation Sans',sans-serif;transform:scaleX(0.8447);">Empleados Por Departamento</div>
<div class="a t" style="left:596.84px;top:448px;font-size:12.5px;line-height:12.5px;color:#222;font-weight:normal;font-family:'Liberation Sans',sans-serif;transform:scaleX(0.8330);">Original de sistema</div>
<div class="a t" style="left:738.84px;top:448px;font-size:12.5px;line-height:12.5px;color:#222;font-weight:normal;font-family:'Liberation Sans',sans-serif;transform:scaleX(0.8718);">Gráfica</div>
<div class="a" style="left:252px;top:480px;width:730px;height:1px;background:#c9c9c9;"></div>
<div class="a" style="left:241px;top:480px;width:10px;height:1px;background:#c9c9c9;"></div>
<div class="a" style="left:594px;top:463px;width:1px;height:17px;background:#c9c9c9;"></div>
<div class="a" style="left:736px;top:463px;width:1px;height:17px;background:#c9c9c9;"></div>
<div class="a" style="left:865px;top:463px;width:1px;height:17px;background:#c9c9c9;"></div>
<div class="a t" style="left:253.84px;top:466px;font-size:12.5px;line-height:12.5px;color:#222;font-weight:normal;font-family:'Liberation Sans',sans-serif;transform:scaleX(0.8613);">Empleados con estado inactivo</div>
<div class="a t" style="left:596.84px;top:466px;font-size:12.5px;line-height:12.5px;color:#222;font-weight:normal;font-family:'Liberation Sans',sans-serif;transform:scaleX(0.8330);">Original de sistema</div>
<div class="a t" style="left:738.84px;top:466px;font-size:12.5px;line-height:12.5px;color:#222;font-weight:normal;font-family:'Liberation Sans',sans-serif;transform:scaleX(0.8718);">Gráfica</div>
<div class="a" style="left:252px;top:498px;width:730px;height:1px;background:#c9c9c9;"></div>
<div class="a" style="left:241px;top:498px;width:10px;height:1px;background:#c9c9c9;"></div>
<div class="a" style="left:594px;top:481px;width:1px;height:17px;background:#c9c9c9;"></div>
<div class="a" style="left:736px;top:481px;width:1px;height:17px;background:#c9c9c9;"></div>
<div class="a" style="left:865px;top:481px;width:1px;height:17px;background:#c9c9c9;"></div>
<div class="a t" style="left:253.84px;top:484px;font-size:12.5px;line-height:12.5px;color:#222;font-weight:normal;font-family:'Liberation Sans',sans-serif;transform:scaleX(0.8459);">Empleados Ficha Informativa</div>
<div class="a t" style="left:596.84px;top:484px;font-size:12.5px;line-height:12.5px;color:#222;font-weight:normal;font-family:'Liberation Sans',sans-serif;transform:scaleX(0.8330);">Original de sistema</div>
<div class="a t" style="left:738.84px;top:484px;font-size:12.5px;line-height:12.5px;color:#222;font-weight:normal;font-family:'Liberation Sans',sans-serif;transform:scaleX(0.8718);">Gráfica</div>
<div class="a" style="left:252px;top:537px;width:730px;height:2px;background:#b9b9b9;"></div>
<div class="a" style="left:241px;top:537px;width:10px;height:1px;background:#c9c9c9;"></div>
<svg class="a" style="left:256px;top:522px;" width="13" height="13" viewBox="0 0 13 13"><circle cx="6.5" cy="6.5" r="5.8" fill="none" stroke="#444" stroke-width="1.2"/><path d="M4 4L8.7 8.7M8.7 5V8.7H5" fill="none" stroke="#444" stroke-width="1.3"/></svg>
<div class="a t" style="left:275.04px;top:523px;font-size:12.5px;line-height:12.5px;color:#8c8c8c;font-weight:normal;font-family:'Liberation Sans',sans-serif;transform:scaleX(0.8438);">Propietario : Catálogo de Equipos</div>
<div class="a" style="left:252px;top:556px;width:730px;height:1px;background:#c9c9c9;"></div>
<div class="a" style="left:241px;top:556px;width:10px;height:1px;background:#c9c9c9;"></div>
<div class="a" style="left:594px;top:539px;width:1px;height:17px;background:#c9c9c9;"></div>
<div class="a" style="left:736px;top:539px;width:1px;height:17px;background:#c9c9c9;"></div>
<div class="a" style="left:865px;top:539px;width:1px;height:17px;background:#c9c9c9;"></div>
<div class="a t" style="left:253.84px;top:542px;font-size:12.5px;line-height:12.5px;color:#222;font-weight:normal;font-family:'Liberation Sans',sans-serif;transform:scaleX(0.8497);">Catálogo principal de Equipos</div>
<div class="a t" style="left:596.84px;top:542px;font-size:12.5px;line-height:12.5px;color:#222;font-weight:normal;font-family:'Liberation Sans',sans-serif;transform:scaleX(0.8330);">Original de sistema</div>
<div class="a t" style="left:738.84px;top:542px;font-size:12.5px;line-height:12.5px;color:#222;font-weight:normal;font-family:'Liberation Sans',sans-serif;transform:scaleX(0.8718);">Gráfica</div>
<div class="a" style="left:252px;top:574px;width:730px;height:1px;background:#c9c9c9;"></div>
<div class="a" style="left:241px;top:574px;width:10px;height:1px;background:#c9c9c9;"></div>
<div class="a" style="left:594px;top:557px;width:1px;height:17px;background:#c9c9c9;"></div>
<div class="a" style="left:736px;top:557px;width:1px;height:17px;background:#c9c9c9;"></div>
<div class="a" style="left:865px;top:557px;width:1px;height:17px;background:#c9c9c9;"></div>
<div class="a t" style="left:253.84px;top:560px;font-size:12.5px;line-height:12.5px;color:#222;font-weight:normal;font-family:'Liberation Sans',sans-serif;transform:scaleX(0.8478);">Equipos Por Departamento</div>
<div class="a t" style="left:596.84px;top:560px;font-size:12.5px;line-height:12.5px;color:#222;font-weight:normal;font-family:'Liberation Sans',sans-serif;transform:scaleX(0.8330);">Original de sistema</div>
<div class="a t" style="left:738.84px;top:560px;font-size:12.5px;line-height:12.5px;color:#222;font-weight:normal;font-family:'Liberation Sans',sans-serif;transform:scaleX(0.8718);">Gráfica</div>
<div class="a" style="left:252px;top:592px;width:730px;height:1px;background:#c9c9c9;"></div>
<div class="a" style="left:241px;top:592px;width:10px;height:1px;background:#c9c9c9;"></div>
<div class="a" style="left:594px;top:575px;width:1px;height:17px;background:#c9c9c9;"></div>
<div class="a" style="left:736px;top:575px;width:1px;height:17px;background:#c9c9c9;"></div>
<div class="a" style="left:865px;top:575px;width:1px;height:17px;background:#c9c9c9;"></div>
<div class="a t" style="left:253.84px;top:578px;font-size:12.5px;line-height:12.5px;color:#222;font-weight:normal;font-family:'Liberation Sans',sans-serif;transform:scaleX(0.8468);">Equipos Por Clasificacion</div>
<div class="a t" style="left:596.84px;top:578px;font-size:12.5px;line-height:12.5px;color:#222;font-weight:normal;font-family:'Liberation Sans',sans-serif;transform:scaleX(0.8330);">Original de sistema</div>
<div class="a t" style="left:738.84px;top:578px;font-size:12.5px;line-height:12.5px;color:#222;font-weight:normal;font-family:'Liberation Sans',sans-serif;transform:scaleX(0.8718);">Gráfica</div>
<div class="a" style="left:252px;top:610px;width:730px;height:1px;background:#c9c9c9;"></div>
<div class="a" style="left:241px;top:610px;width:10px;height:1px;background:#c9c9c9;"></div>
<div class="a" style="left:594px;top:593px;width:1px;height:17px;background:#c9c9c9;"></div>
<div class="a" style="left:736px;top:593px;width:1px;height:17px;background:#c9c9c9;"></div>
<div class="a" style="left:865px;top:593px;width:1px;height:17px;background:#c9c9c9;"></div>
<div class="a t" style="left:253.84px;top:596px;font-size:12.5px;line-height:12.5px;color:#222;font-weight:normal;font-family:'Liberation Sans',sans-serif;transform:scaleX(0.8475);">Equipos Por Medidor</div>
<div class="a t" style="left:596.84px;top:596px;font-size:12.5px;line-height:12.5px;color:#222;font-weight:normal;font-family:'Liberation Sans',sans-serif;transform:scaleX(0.8330);">Original de sistema</div>
<div class="a t" style="left:738.84px;top:596px;font-size:12.5px;line-height:12.5px;color:#222;font-weight:normal;font-family:'Liberation Sans',sans-serif;transform:scaleX(0.8718);">Gráfica</div>
<div class="a" style="left:252px;top:628px;width:730px;height:1px;background:#c9c9c9;"></div>
<div class="a" style="left:241px;top:628px;width:10px;height:1px;background:#c9c9c9;"></div>
<div class="a" style="left:594px;top:611px;width:1px;height:17px;background:#c9c9c9;"></div>
<div class="a" style="left:736px;top:611px;width:1px;height:17px;background:#c9c9c9;"></div>
<div class="a" style="left:865px;top:611px;width:1px;height:17px;background:#c9c9c9;"></div>
<div class="a t" style="left:253.84px;top:614px;font-size:12.5px;line-height:12.5px;color:#222;font-weight:normal;font-family:'Liberation Sans',sans-serif;transform:scaleX(0.8461);">Equipos Por Estatus</div>
<div class="a t" style="left:596.84px;top:614px;font-size:12.5px;line-height:12.5px;color:#222;font-weight:normal;font-family:'Liberation Sans',sans-serif;transform:scaleX(0.8330);">Original de sistema</div>
<div class="a t" style="left:738.84px;top:614px;font-size:12.5px;line-height:12.5px;color:#222;font-weight:normal;font-family:'Liberation Sans',sans-serif;transform:scaleX(0.8718);">Gráfica</div>
<div class="a" style="left:252px;top:646px;width:730px;height:1px;background:#c9c9c9;"></div>
<div class="a" style="left:241px;top:646px;width:10px;height:1px;background:#c9c9c9;"></div>
<div class="a" style="left:594px;top:629px;width:1px;height:17px;background:#c9c9c9;"></div>
<div class="a" style="left:736px;top:629px;width:1px;height:17px;background:#c9c9c9;"></div>
<div class="a" style="left:865px;top:629px;width:1px;height:17px;background:#c9c9c9;"></div>
<div class="a t" style="left:253.84px;top:632px;font-size:12.5px;line-height:12.5px;color:#222;font-weight:normal;font-family:'Liberation Sans',sans-serif;transform:scaleX(0.8491);">Equipos Por Responsable</div>
<div class="a t" style="left:596.84px;top:632px;font-size:12.5px;line-height:12.5px;color:#222;font-weight:normal;font-family:'Liberation Sans',sans-serif;transform:scaleX(0.8330);">Original de sistema</div>
<div class="a t" style="left:738.84px;top:632px;font-size:12.5px;line-height:12.5px;color:#222;font-weight:normal;font-family:'Liberation Sans',sans-serif;transform:scaleX(0.8718);">Gráfica</div>
<div class="a" style="left:252px;top:664px;width:730px;height:1px;background:#c9c9c9;"></div>
<div class="a" style="left:241px;top:664px;width:10px;height:1px;background:#c9c9c9;"></div>
<div class="a" style="left:594px;top:647px;width:1px;height:17px;background:#c9c9c9;"></div>
<div class="a" style="left:736px;top:647px;width:1px;height:17px;background:#c9c9c9;"></div>
<div class="a" style="left:865px;top:647px;width:1px;height:17px;background:#c9c9c9;"></div>
<div class="a t" style="left:253.84px;top:650px;font-size:12.5px;line-height:12.5px;color:#222;font-weight:normal;font-family:'Liberation Sans',sans-serif;transform:scaleX(0.8551);">Equipos Por Localizacion</div>
<div class="a t" style="left:596.84px;top:650px;font-size:12.5px;line-height:12.5px;color:#222;font-weight:normal;font-family:'Liberation Sans',sans-serif;transform:scaleX(0.8330);">Original de sistema</div>
<div class="a t" style="left:738.84px;top:650px;font-size:12.5px;line-height:12.5px;color:#222;font-weight:normal;font-family:'Liberation Sans',sans-serif;transform:scaleX(0.8718);">Gráfica</div>
<div class="a" style="left:252px;top:682px;width:730px;height:1px;background:#c9c9c9;"></div>
<div class="a" style="left:241px;top:682px;width:10px;height:1px;background:#c9c9c9;"></div>
<div class="a" style="left:594px;top:665px;width:1px;height:17px;background:#c9c9c9;"></div>
<div class="a" style="left:736px;top:665px;width:1px;height:17px;background:#c9c9c9;"></div>
<div class="a" style="left:865px;top:665px;width:1px;height:17px;background:#c9c9c9;"></div>
<div class="a t" style="left:253.84px;top:668px;font-size:12.5px;line-height:12.5px;color:#222;font-weight:normal;font-family:'Liberation Sans',sans-serif;transform:scaleX(0.8317);">Equipos Por Familia</div>
<div class="a t" style="left:596.84px;top:668px;font-size:12.5px;line-height:12.5px;color:#222;font-weight:normal;font-family:'Liberation Sans',sans-serif;transform:scaleX(0.8550);">Modificado por usuario</div>
<div class="a t" style="left:738.84px;top:668px;font-size:12.5px;line-height:12.5px;color:#222;font-weight:normal;font-family:'Liberation Sans',sans-serif;transform:scaleX(0.8718);">Gráfica</div>
<div class="a" style="left:594px;top:683px;width:1px;height:15px;background:#c9c9c9;"></div>
<div class="a" style="left:736px;top:683px;width:1px;height:15px;background:#c9c9c9;"></div>
<div class="a" style="left:865px;top:683px;width:1px;height:15px;background:#c9c9c9;"></div>
<div class="a t" style="left:253.84px;top:686px;font-size:12.5px;line-height:12.5px;color:#222;font-weight:normal;font-family:'Liberation Sans',sans-serif;transform:scaleX(0.8513);">Equipos Por Modelo</div>
<div class="a t" style="left:596.84px;top:686px;font-size:12.5px;line-height:12.5px;color:#222;font-weight:normal;font-family:'Liberation Sans',sans-serif;transform:scaleX(0.8330);">Original de sistema</div>
<div class="a t" style="left:738.84px;top:686px;font-size:12.5px;line-height:12.5px;color:#222;font-weight:normal;font-family:'Liberation Sans',sans-serif;transform:scaleX(0.8718);">Gráfica</div>
<div class="a t" style="left:253.81px;top:708px;font-size:11px;line-height:11px;color:#333;font-weight:normal;font-family:'Liberation Sans',sans-serif;">Total 37 Registros</div>
<div class="a" style="left:117px;top:730px;width:1px;height:19px;background:#b8b8b8;"></div>
<div class="a" style="left:472px;top:730px;width:1px;height:19px;background:#b8b8b8;"></div>
<div class="a" style="left:757px;top:730px;width:1px;height:19px;background:#b8b8b8;"></div>
<div class="a" style="left:842px;top:730px;width:1px;height:19px;background:#b8b8b8;"></div>
<div class="a" style="left:897px;top:730px;width:1px;height:19px;background:#b8b8b8;"></div>
<div class="a" style="left:952px;top:730px;width:1px;height:19px;background:#b8b8b8;"></div>
<div class="a t" style="left:122.91px;top:735px;font-size:11px;line-height:11px;color:#333;font-weight:normal;font-family:'Liberation Sans',sans-serif;transform:scaleX(0.9813);">Empresa: Aditamentos metalicos del centro S.A. de C.V.</div>
<div class="a t" style="left:475.61px;top:735px;font-size:11px;line-height:11px;color:#333;font-weight:normal;font-family:'Liberation Sans',sans-serif;transform:scaleX(0.9572);">Administrador: MIGUEL()</div>
<div class="a t" style="left:760.30px;top:735px;font-size:11px;line-height:11px;color:#333;font-weight:normal;font-family:'Liberation Sans',sans-serif;transform:scaleX(0.9620);">Access 2000</div>
<div class="a t" style="left:955.80px;top:735px;font-size:11px;line-height:11px;color:#aaa;font-weight:normal;font-family:'Liberation Sans',sans-serif;transform:scaleX(0.8944);">CAPS</div>
<svg class="a" style="left:994px;top:736px;" width="14" height="14" viewBox="0 0 14 14"><path d="M9.1 3.1H12.1M10.6 1.6V4.6" stroke="#6a6a6a" stroke-width="1"/><path d="M4.9 7.3H7.9M6.4 5.8V8.8" stroke="#6a6a6a" stroke-width="1"/><path d="M9.1 7.3H12.1M10.6 5.8V8.8" stroke="#6a6a6a" stroke-width="1"/><path d="M0.8 11.4H3.8M2.3 9.9V12.9" stroke="#6a6a6a" stroke-width="1"/><path d="M4.9 11.4H7.9M6.4 9.9V12.9" stroke="#6a6a6a" stroke-width="1"/><path d="M9.1 11.4H12.1M10.6 9.9V12.9" stroke="#6a6a6a" stroke-width="1"/></svg>
</body></html>
